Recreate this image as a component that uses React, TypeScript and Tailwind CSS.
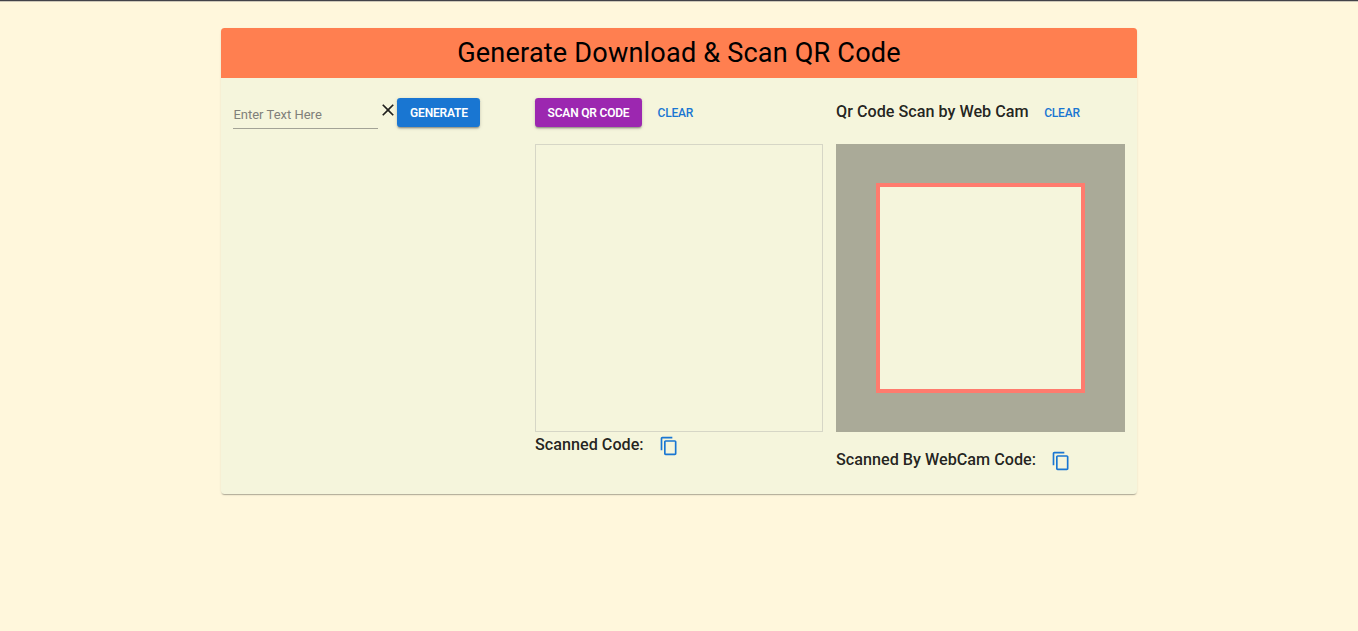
import type { ReactNode } from "react";

function Icon({ d, className }: { d: string; className: string }) {
  return (
    <svg viewBox="0 0 24 24" fill="currentColor" className={`size-5 shrink-0 ${className}`} aria-hidden="true">
      <path d={d} />
    </svg>
  );
}

const CLOSE = "M19 6.41 17.59 5 12 10.59 6.41 5 5 6.41 10.59 12 5 17.59 6.41 19 12 13.41 17.59 19 19 17.59 13.41 12z";
const COPY =
  "M16 1H4c-1.1 0-2 .9-2 2v14h2V3h12V1zm3 4H8c-1.1 0-2 .9-2 2v14c0 1.1.9 2 2 2h11c1.1 0 2-.9 2-2V7c0-1.1-.9-2-2-2zm0 16H8V7h11v14z";

function Contained({ className, children }: { className: string; children: ReactNode }) {
  return (
    <button
      className={`h-[29.4px] shrink-0 rounded-[3.3px] pt-[1.5px] text-center text-[12px] font-semibold tracking-[-0.2px] whitespace-nowrap text-white shadow-[0_2.5px_1px_-1.6px_rgba(0,0,0,0.2),0_1.6px_1.6px_rgba(0,0,0,0.14),0_1px_4px_rgba(0,0,0,0.12)] ${className}`}
    >
      {children}
    </button>
  );
}

function Clear() {
  return (
    <button className="ml-[15.5px] h-[29.5px] pt-px text-[12px] font-medium tracking-[-0.2px] text-[#1976d2]">CLEAR</button>
  );
}

function Heading({ children }: { children: ReactNode }) {
  return <h6 className="text-[16.2px] leading-[26px] font-medium whitespace-nowrap text-black/87">{children}</h6>;
}

export default function App() {
  return (
    <div className="min-h-screen border-t border-[#424248] bg-[#fff7dc] font-[Roboto,sans-serif] antialiased">
      <div className="border-t border-[#cdc7b8] pt-[26px]">
        <main className="mx-auto h-[466px] w-[916px] overflow-hidden rounded-[3.5px] bg-[#f5f5dc] shadow-[0_1.6px_1px_-1px_rgba(0,0,0,0.2),0_1px_1px_rgba(0,0,0,0.08),0_1px_2.5px_rgba(0,0,0,0.08)]">
          <h1 className="h-[50px] bg-[#ff7f50] pt-px text-center text-[27.1px] leading-[48px] font-normal tracking-[0.18px] text-black">
            Generate Download &amp; Scan QR Code
          </h1>
          <div className="grid grid-cols-[289px_289px_289px] gap-3 px-[13px] pt-5">
            <section className="-ml-[0.6px] flex items-start">
              <input
                placeholder="Enter Text Here"
                className="h-[31px] w-[145px] border-b border-[#a3a396] pt-[3px] text-[13px] outline-none placeholder:text-[#80807a]"
              />
              <Icon d={CLOSE} className="mt-[2px] -mr-[1px] text-black/87" />
              <Contained className="w-[83px] bg-[#1976d2]">GENERATE</Contained>
            </section>
            <section>
              <div className="flex h-[45.5px] items-start">
                <Contained className="w-[107px] bg-[#9c27b0]">SCAN QR CODE</Contained>
                <Clear />
              </div>
              <div className="h-72 w-[288.4px] border border-[#d6d6c6]" />
              <div className="flex">
                <Heading>Scanned Code:</Heading>
                <Icon d={COPY} className="mt-1 ml-[15.2px] text-[#1976d2]" />
              </div>
            </section>
            <section>
              <div className="flex h-[45.5px] items-start">
                <div className="pt-px">
                  <Heading>Qr Code Scan by Web Cam</Heading>
                </div>
                <Clear />
              </div>
              <div className="h-72 w-[289px] bg-[#aaaa98] px-10 pt-[39.5px] pb-[39px]">
                <div className="size-full border-4 border-[#ff7b6e] bg-[#f5f5dc]" />
              </div>
              <div className="flex pt-[15px]">
                <Heading>Scanned By WebCam Code:</Heading>
                <Icon d={COPY} className="mt-1 ml-[15.2px] text-[#1976d2]" />
              </div>
            </section>
          </div>
        </main>
      </div>
    </div>
  );
}
